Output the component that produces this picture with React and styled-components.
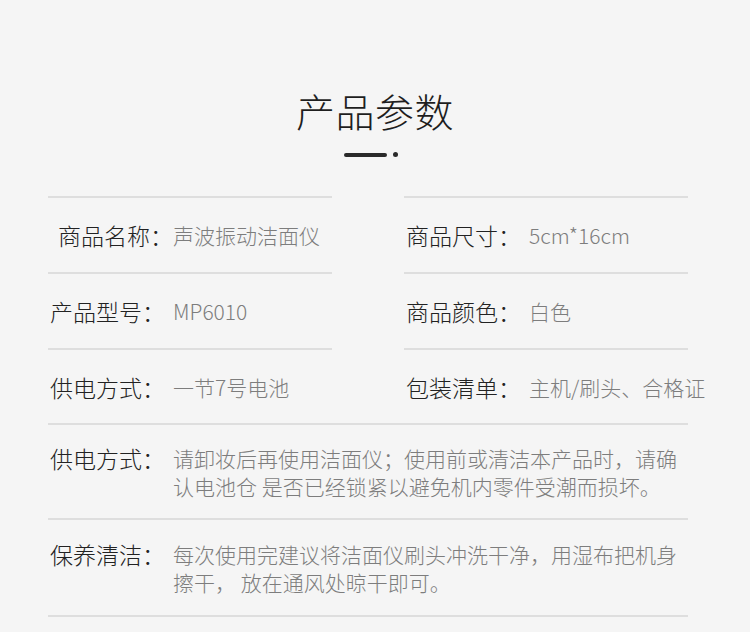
import styled, { createGlobalStyle } from "styled-components";

const GlobalStyle = createGlobalStyle`
    body {
        margin: 0;
        background: #f5f5f5;
        font-family: "Noto Sans CJK SC", sans-serif;
    }
`;

const specs = [
    ["商品名称", "声波振动洁面仪", "商品尺寸", "5cm*16cm"],
    ["产品型号", "MP6010", "商品颜色", "白色"],
    ["供电方式", "一节7号电池", "包装清单", "主机/刷头、合格证"],
];

const notes = [
    ["供电方式", "请卸妆后再使用洁面仪；使用前或清洁本产品时，请确认电池仓 是否已经锁紧以避免机内零件受潮而损坏。", 19, 18],
    ["保养清洁", "每次使用完建议将洁面仪刷头冲洗干净，用湿布把机身擦干， 放在通风处晾干即可。", 20, 19],
];

export default function App() {
    return (
        <Page>
            <GlobalStyle />
            <Title>产品参数</Title>
            <Underline>
                <Bar />
                <Dot />
            </Underline>
            <Table>
                <Grid>
                    {specs.map(([l1, v1, l2, v2], i) => [
                        <Cell key={l1 + v1}>
                            <Label $indent={i === 0 ? 8 : 0}>{l1}：</Label>
                            <Value>{v1}</Value>
                        </Cell>,
                        <Cell key={l2 + v2}>
                            <Label>{l2}：</Label>
                            <Value>{v2}</Value>
                        </Cell>,
                    ])}
                </Grid>
                {notes.map(([label, text, top, bottom], i) => (
                    <Note key={i} $top={top} $bottom={bottom} $last={i === notes.length - 1}>
                        <Label>{label}：</Label>
                        <NoteText>{text}</NoteText>
                    </Note>
                ))}
            </Table>
        </Page>
    );
}

const Page = styled.div`
    width: 750px;
    height: 632px;
    overflow: hidden;
    display: flex;
    flex-direction: column;
    align-items: center;
    padding-top: 89px;
    box-sizing: border-box;
`;

const Title = styled.h1`
    margin: 0;
    font-family: "Noto Sans CJK SC", sans-serif;
    font-size: 39px;
    line-height: 42px;
    font-weight: 300;
    color: #1e1e1e;
    letter-spacing: 0.5px;
`;

const Underline = styled.div`
    display: flex;
    align-items: center;
    gap: 6px;
    margin-top: 21px;
    margin-left: -9px;
`;

const Bar = styled.span`
    width: 43px;
    height: 4px;
    border-radius: 2px;
    background: #2a2a2a;
`;

const Dot = styled.span`
    width: 5px;
    height: 5px;
    border-radius: 50%;
    background: #2a2a2a;
`;

const Table = styled.div`
    align-self: flex-start;
    margin-left: 48px;
    margin-top: 39px;
    width: 640px;
`;

const Grid = styled.div`
    display: grid;
    grid-template-columns: 284px 284px;
    column-gap: 72px;
`;

const Cell = styled.div`
    height: 76px;
    box-sizing: border-box;
    border-top: 2px solid #dedede;
    display: flex;
    align-items: center;
    padding-left: 2px;
    &:nth-child(5), &:nth-child(6) {
        height: 75px;
    }
`;

const Label = styled.span`
    flex-shrink: 0;
    box-sizing: border-box;
    width: 123px;
    padding-left: ${(p) => p.$indent || 0}px;
    font-family: "Noto Sans CJK SC", sans-serif;
    font-size: 23px;
    font-weight: 300;
    line-height: 28px;
    color: #222;
    white-space: nowrap;
`;

const Value = styled.span`
    font-family: "Noto Sans CJK SC", sans-serif;
    font-size: 21px;
    font-weight: 300;
    line-height: 28px;
    color: #7d7d7d;
    white-space: nowrap;
`;

const Note = styled.div`
    display: flex;
    align-items: flex-start;
    border-top: 2px solid #dedede;
    border-bottom: ${(p) => (p.$last ? "2px solid #dedede" : "none")};
    padding: ${(p) => p.$top}px 0 ${(p) => p.$bottom}px 2px;
`;

const NoteText = styled.p`
    margin: 0;
    width: 515px;
    font-family: "Noto Sans CJK SC", sans-serif;
    font-size: 21px;
    font-weight: 300;
    line-height: 28px;
    color: #7d7d7d;
`;
